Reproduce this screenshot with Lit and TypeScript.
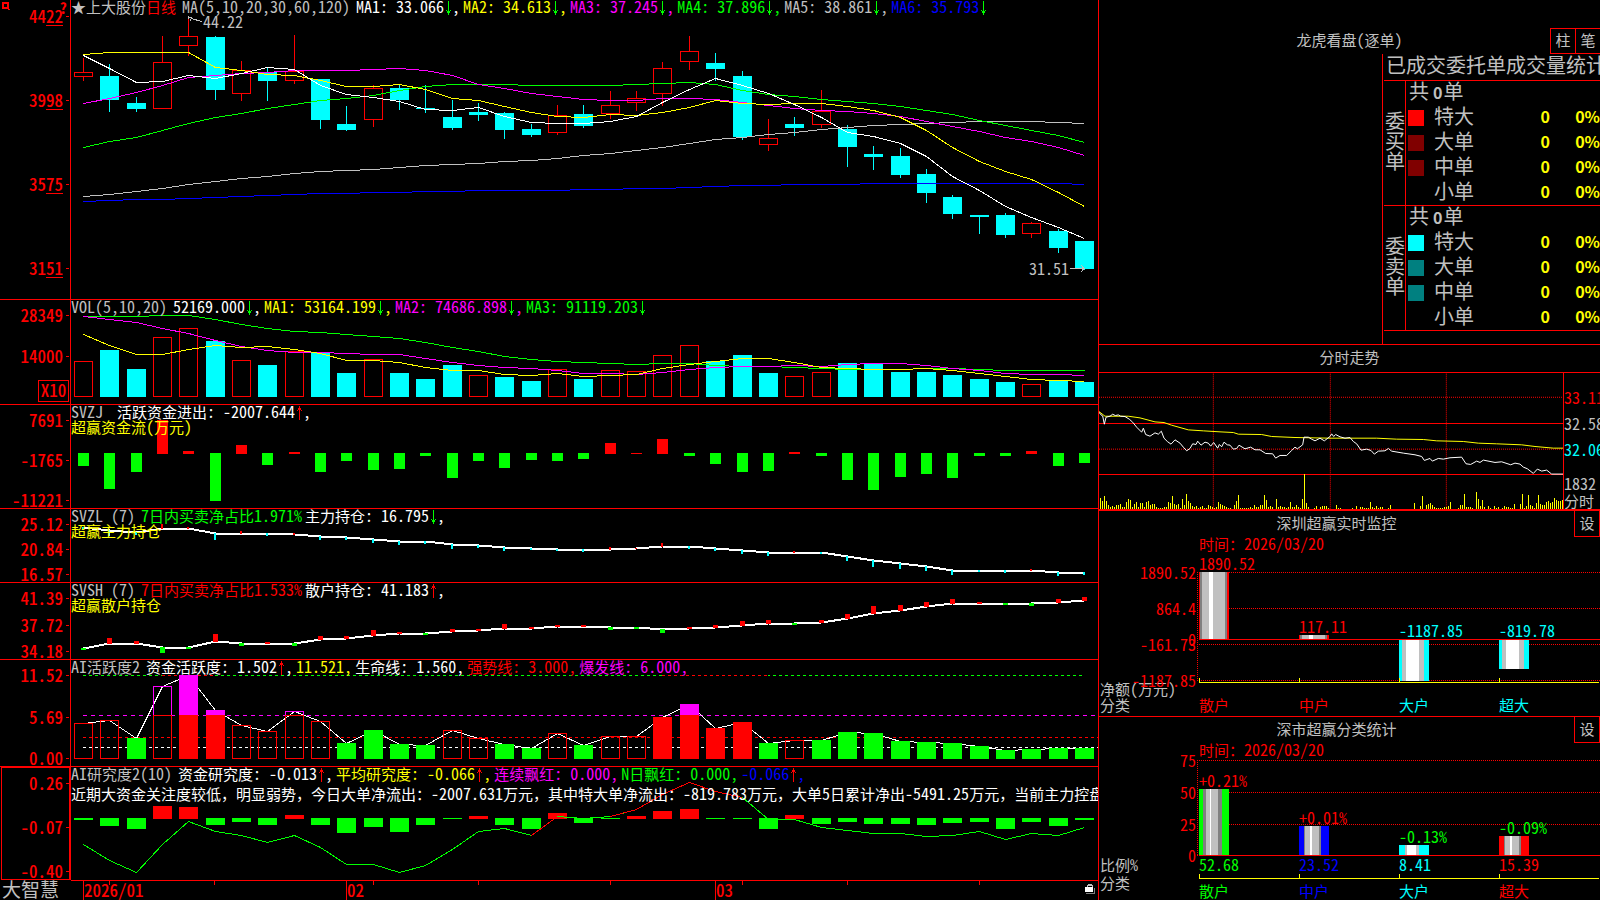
import { LitElement, html, svg, css, nothing } from "lit";
import { customElement, property } from "lit/decorators.js";

/* ---------- palette ---------- */
const RED = "#ff0000";
const CYAN = "#00ffff";
const GREEN = "#00ff00";
const YELLOW = "#ffff00";
const MAGENTA = "#ff00ff";
const BLUE = "#0000ff";
const WHITE = "#ffffff";
const SILVER = "#c0c0c0";
const GRAY = "#808080";

/* ---------- shared helpers ---------- */
const cx = (i: number) => Math.round(83 + 26.34 * i);

/** Full-width runs are set one size smaller than the half-width digits. */
const mix = (text: string) =>
  text
    .split(/([\u2000-\uffff]+)/)
    .filter(Boolean)
    .map((run) => (/[\u2000-\uffff]/.test(run) ? html`<span class="wide">${run}</span>` : run));

const arrow = (dir: "up" | "down") =>
  dir === "down"
    ? html`<svg class="arrow" viewBox="0 0 8 14"><path d="M4 0h1v14h-1zM3 10h3v2h-3zM2 9h1v1h-1zM6 9h1v1h-1z" fill=${GREEN} /></svg>`
    : html`<svg class="arrow" viewBox="0 0 8 14"><path d="M4 0h1v14h-1zM3 2h3v2h-3zM2 4h1v1h-1zM6 4h1v1h-1z" fill=${RED} /></svg>`;

const line = (ys: number[], color: string, width = 1, from = 0) => svg`
  <polyline fill="none" stroke=${color} stroke-width=${width} vector-effect="non-scaling-stroke"
    points=${ys.map((y, i) => `${cx(i + from) + 0.5},${y + 0.5}`).join(" ")} />`;

const box = (x: number, y: number, w: number, h: number, color: string) =>
  svg`<rect x=${x} y=${y} width=${w} height=${h} fill=${color} />`;

const frame = (x: number, y: number, w: number, h: number, color: string) =>
  svg`<rect x=${x + 0.5} y=${y + 0.5} width=${w - 1} height=${h - 1} fill="none" stroke=${color} vector-effect="non-scaling-stroke" />`;

const rule = (x1: number, y1: number, x2: number, y2: number, color: string, dash = "") => svg`
  <line x1=${x1} y1=${y1} x2=${x2} y2=${y2} stroke=${color} stroke-dasharray=${dash || nothing}
    vector-effect="non-scaling-stroke" />`;

/* ---------- series ---------- */
type Candle = [string, number, number, number, number];
const candles: Candle[] = [
  ["R", 58, 72, 76, 81], ["C", 64, 76, 100, 111], ["C", 97, 103, 109, 111], ["R", 36, 62, 108, 108],
  ["R", 16, 36, 45, 56], ["C", 36, 37, 90, 99], ["R", 61, 70, 93, 101], ["C", 68, 72, 81, 100],
  ["R", 35, 71, 80, 84], ["C", 79, 79, 120, 128], ["C", 106, 124, 130, 130], ["R", 85, 88, 119, 127],
  ["C", 85, 88, 100, 109], ["C", 85, 108, 109, 112], ["C", 100, 117, 128, 129], ["C", 103, 112, 115, 120],
  ["C", 112, 113, 130, 138], ["C", 124, 129, 135, 136], ["R", 105, 115, 132, 135], ["C", 105, 114, 126, 127],
  ["R", 91, 105, 113, 119], ["R", 91, 98, 102, 111], ["R", 62, 68, 93, 106], ["R", 36, 51, 61, 70],
  ["C", 53, 63, 69, 80], ["C", 71, 76, 137, 139], ["R", 119, 138, 144, 151], ["C", 117, 124, 128, 135],
  ["R", 90, 111, 124, 128], ["C", 125, 129, 147, 166], ["C", 146, 154, 157, 169], ["C", 148, 156, 175, 177],
  ["C", 169, 174, 193, 202], ["C", 195, 197, 214, 218], ["C", 215, 215, 217, 233], ["C", 213, 215, 235, 237],
  ["R", 222, 223, 233, 238], ["C", 229, 231, 248, 252], ["C", 241, 241, 269, 269],
];
const ma: [string, number[]][] = [
  [BLUE, [201, 200, 199, 199, 198, 197, 196, 195, 194, 193, 193, 192, 192, 191, 191, 190, 190, 190, 190, 189, 189, 188, 188, 187, 186, 185, 185, 184, 184, 184, 183, 183, 183, 183, 183, 183, 183, 183, 184]],
  [SILVER, [196, 194, 191, 188, 184, 181, 178, 176, 173, 171, 170, 169, 167, 165, 164, 163, 161, 160, 158, 155, 153, 150, 147, 143, 139, 137, 134, 132, 129, 127, 125, 124, 123, 122, 121, 121, 121, 122, 123]],
  [GREEN, [147, 141, 137, 130, 123, 117, 113, 108, 104, 100, 98, 95, 90, 86, 84, 84, 84, 85, 85, 85, 85, 84, 83, 82, 84, 90, 94, 96, 99, 101, 103, 106, 110, 114, 120, 125, 130, 135, 142]],
  [MAGENTA, [103, 98, 92, 85, 77, 75, 73, 72, 70, 70, 70, 69, 68, 70, 75, 84, 88, 93, 96, 99, 100, 100, 98, 98, 99, 102, 105, 108, 110, 111, 113, 116, 121, 126, 131, 137, 141, 147, 155]],
  [YELLOW, [54, 52, 52, 52, 52, 67, 70, 74, 75, 80, 86, 86, 84, 89, 98, 100, 106, 112, 116, 117, 114, 115, 112, 107, 100, 103, 104, 103, 103, 106, 110, 117, 130, 147, 161, 171, 179, 192, 206]],
  [WHITE, [55, 68, 82, 81, 75, 78, 73, 67, 69, 85, 94, 97, 101, 109, 110, 107, 116, 122, 123, 123, 121, 116, 102, 89, 78, 85, 93, 104, 117, 132, 136, 143, 156, 176, 190, 206, 217, 227, 238]],
];

const volKind = "RCCRRCRCRCCRCCCRCCRCRRRRCCCRRCCCCCCCRCC";
const volTop = [361, 350, 369, 337, 328, 341, 360, 365, 351, 353, 373, 359, 373, 379, 365, 375, 377, 381, 369, 379, 370, 371, 355, 345, 361, 355, 373, 376, 372, 363, 364, 372, 372, 375, 379, 382, 384, 381, 382];
const volMa: [string, number[]][] = [
  [GREEN, [316, 316, 316, 315, 315, 319, 324, 328, 331, 332, 334, 336, 338, 342, 347, 351, 356, 359, 361, 362, 363, 364, 363, 363, 365, 366, 366, 367, 368, 369, 369, 369, 368, 368, 369, 370, 370, 370, 370]],
  [MAGENTA, [316, 319, 322, 328, 333, 340, 346, 350, 352, 352, 353, 354, 354, 358, 362, 365, 367, 368, 370, 373, 373, 374, 372, 369, 367, 366, 366, 365, 366, 364, 363, 363, 365, 368, 370, 373, 374, 374, 375]],
  [YELLOW, [334, 345, 354, 354, 349, 345, 347, 346, 349, 353, 360, 360, 362, 367, 370, 370, 374, 375, 373, 376, 375, 374, 368, 364, 361, 358, 358, 362, 367, 368, 369, 369, 368, 370, 373, 376, 379, 380, 381]],
];

/* values above the 453 base line are inflows */
const flow = [466, 489, 472, 420, 451, 501, 445, 465, 452, 472, 461, 470, 469, 456, 478, 461, 468, 460, 461, 459, 443, 453, 439, 456, 464, 472, 471, 452, 456, 480, 490, 477, 474, 478, 456, 456, 451, 466, 463];

const mainHold = [527, 530, 532, 528, 528, 533, 533, 533, 534, 536, 537, 539, 541, 541, 544, 545, 547, 548, 549, 549, 549, 548, 546, 546, 548, 550, 552, 552, 552, 556, 560, 563, 566, 570, 570, 570, 570, 572, 572];
const mainMark = [-2, -5, -2, 4, 1, -6, 2, -2, 1, -3, -2, -3, -3, -2, -4, -2, -3, -1, -1, -2, 2, 0, 3, -2, -2, -3, -3, 1, -1, -4, -6, -5, -4, -4, -1, -2, 1, -3, -2];
const retailHold = [648, 643, 643, 647, 647, 641, 643, 643, 643, 639, 638, 635, 633, 633, 631, 630, 628, 628, 626, 626, 627, 627, 629, 628, 627, 625, 623, 623, 622, 618, 613, 610, 606, 603, 603, 603, 603, 602, 600];
const retailMark = [-1, 5, 2, -5, -1, 7, -2, 1, -2, 3, 2, 5, 1, -1, 2, 1, 4, 1, 1, 1, -2, -1, -3, 1, 2, 4, 3, -1, 2, 4, 7, 5, 4, 4, 1, -1, -2, 3, 3];

/* R outline, G weak, F strong, M burst filled, O burst outline */
const actKind = "RRGOMMRROR" + "GGGGRRGGRG" + "RRFMFFGRGG" + "GGGGGGGGG";
const actTop = [723, 720, 738, 686, 675, 710, 725, 731, 711, 721, 743, 730, 744, 745, 730, 738, 744, 748, 733, 745, 736, 736, 717, 704, 728, 722, 743, 740, 740, 732, 733, 741, 742, 743, 746, 750, 749, 748, 748];

const study = [820, 826, 829, 806, 807, 825, 822, 825, 815, 825, 833, 827, 832, 825, 819, 816, 825, 829, 813, 823, 819, 816, 811, 809, 819, 819, 829, 815, 824, 822, 824, 824, 825, 823, 822, 829, 822, 826, 820];
const studyLine = [844, 860, 872, 844, 821, 831, 835, 842, 835, 847, 864, 864, 872, 865, 849, 831, 828, 835, 816, 818, 816, 809, 794, 782, 791, 797, 819, 819, 827, 830, 833, 833, 836, 835, 831, 839, 833, 835, 827];

/* ---------- plots ---------- */
const priceplot = () => svg`
  ${candles.map(([k, hi, top, bot, lo], i) => {
    const c = cx(i);
    return k === "R"
      ? svg`${box(c, hi, 1, top - hi, RED)}${box(c, bot, 1, Math.max(lo - bot, 0), RED)}${frame(c - 9, top, 19, bot - top + 1, RED)}`
      : svg`${box(c, hi, 1, lo - hi + 1, CYAN)}${box(c - 9, top, 19, Math.max(bot - top, 1), CYAN)}`;
  })}
  ${ma.map(([color, ys]) => line(ys, color))}
  <path d="M189 17.5h3M188.5 16v3M190.500 18.500v2M191 18.500l11 3" fill="none" stroke=${SILVER} vector-effect="non-scaling-stroke" />
  <path d="M1070 268.500h14M1081 265l3 3.500l-3 3.500" fill="none" stroke=${SILVER} vector-effect="non-scaling-stroke" />`;

const volplot = () => svg`
  ${volTop.map((t, i) => (volKind[i] === "R" ? frame : box)(cx(i) - 9, t, 19, 397 - t, volKind[i] === "R" ? RED : CYAN))}
  ${volMa.map(([color, ys]) => line(ys, color))}`;

const flowplot = () =>
  flow.map((v, i) => (v <= 453 ? box(cx(i) - 5, v, 11, 454 - v, RED) : box(cx(i) - 5, 453, 11, v - 453, GREEN)));

const holdplot = (ys: number[], marks: number[], w: number, down: string) => svg`
  ${line(ys, WHITE, 2)}
  ${ys.map((y, i) => {
    const m = marks[i];
    const x = cx(i) - Math.floor(w / 2);
    return m >= 0 ? box(x, y - m, w, m + 1, RED) : box(x, y, w, 1 - m, down);
  })}`;

const activeplot = () => svg`
  ${rule(83, 675.5, 1084, 675.5, GREEN, "3 3")}
  ${[[3, 5], [22, 26]].map(([a, b]) => svg`${box(cx(a), 675, cx(b) - cx(a), 1, "#000")}${rule(cx(a), 675.5, cx(b), 675.5, RED, "3 3")}`)}
  ${rule(83, 715.5, 1098, 715.5, MAGENTA, "4 4")}
  ${rule(83, 737.5, 1098, 737.5, RED, "3 3")}
  ${rule(83, 747.5, 1098, 747.5, WHITE, "3 3")}
  ${line(actTop, WHITE)}
  ${actTop.map((t, i) => {
    const x = cx(i) - 9;
    const h = 759 - t;
    switch (actKind[i]) {
      case "G": return box(x, t, 19, h, GREEN);
      case "F": return box(x, t, 19, h, RED);
      case "M": return svg`${box(x, t, 19, 715 - t, MAGENTA)}${box(x, 715, 19, 44, RED)}`;
      case "O": return svg`${frame(x, t, 19, 716 - t, MAGENTA)}${frame(x, 715, 19, 44, RED)}`;
      default: return frame(x, t, 19, h, RED);
    }
  })}`;

const studyplot = () => svg`
  ${study.map((v, i) => (v < 818 ? box(cx(i) - 9, v, 19, 819 - v, RED) : box(cx(i) - 9, 818, 19, v - 818, GREEN)))}
  ${line(studyLine, GREEN)}
  ${line(studyLine.slice(17, 19), RED, 1, 17)}
  ${line(studyLine.slice(20, 26), RED, 1, 20)}`;

/* ---------- indicator captions ---------- */
type Seg = [string, string, ("up" | "down" | "none" | "bare")?];
const seg = ([text, tone, dir]: Seg, last: boolean) => html`<span class="seg ${tone}"
    >${mix(text)}${dir === "up" || dir === "down" ? arrow(dir) : nothing}${dir === "bare" || (last && dir === "down") ? nothing : ","}</span>`;

interface Panel {
  cls: string;
  view: string;
  ticks: string[];
  title: unknown;
  segs: Seg[];
  note?: [string, string];
  plot: () => unknown;
}

const panels: Panel[] = [
  {
    cls: "price", view: "71 0 1027 299", ticks: ["4422", "3998", "3575", "3151"],
    title: html`${mix("★上大股份")}<span class="red">${mix("日线")}</span><span class="ml">MA(5,10,20,30,60,120)</span>`,
    segs: [["MA1: 33.066", "white", "down"], ["MA2: 34.613", "yellow", "down"], ["MA3: 37.245", "magenta", "down"], ["MA4: 37.896", "green", "down"], ["MA5: 38.861", "silver", "down"], ["MA6: 35.793", "blue", "down"]],
    plot: priceplot,
  },
  {
    cls: "vol", view: "71 300 1027 104", ticks: ["28349", "14000"], title: "VOL(5,10,20)",
    segs: [["52169.000", "white", "down"], ["MA1: 53164.199", "yellow", "down"], ["MA2: 74686.898", "magenta", "down"], ["MA3: 91119.203", "green", "down"]],
    plot: volplot,
  },
  {
    cls: "flow", view: "71 405 1027 103", ticks: ["7691", "-1765", "-11221"], title: "SVZJ ",
    segs: [["活跃资金进出: -2007.644", "white", "up"]],
    note: ["超赢资金流(万元)", "yellow"], plot: flowplot,
  },
  {
    cls: "hold", view: "71 509 1027 73", ticks: ["25.12", "20.84", "16.57"], title: "SVZL (7)",
    segs: [["7日内买卖净占比1.971%", "green", "bare"], ["主力持仓: 16.795", "white", "down"]],
    note: ["超赢主力持仓", "yellow"], plot: () => holdplot(mainHold, mainMark, 2, CYAN),
  },
  {
    cls: "hold", view: "71 583 1027 76", ticks: ["41.39", "37.72", "34.18"], title: "SVSH (7)",
    segs: [["7日内买卖净占比1.533%", "red", "bare"], ["散户持仓: 41.183", "white", "up"]],
    note: ["超赢散户持仓", "yellow"], plot: () => holdplot(retailHold, retailMark, 5, GREEN),
  },
  {
    cls: "active", view: "71 660 1027 106", ticks: ["11.52", "5.69", "0.00"], title: mix("AI活跃度2"),
    segs: [["资金活跃度: 1.502", "white", "up"], ["11.521", "yellow"], ["生命线: 1.560", "white"], ["强势线: 3.000", "red"], ["爆发线: 6.000", "magenta"]],
    plot: activeplot,
  },
  {
    cls: "study", view: "71 767 1027 113", ticks: ["0.26", "-0.07", "-0.40"], title: mix("AI研究度2(10)"),
    segs: [["资金研究度: -0.013", "white", "up"], ["平均研究度: -0.066", "yellow", "up"], ["连续飘红: 0.000", "magenta"], ["N日飘红: 0.000", "green"], ["-0.066", "blue", "up"]],
    note: ["近期大资金关注度较低，明显弱势，今日大单净流出：-2007.631万元，其中特大单净流出：-819.783万元，大单5日累计净出-5491.25万元，当前主力控盘", "white"],
    plot: studyplot,
  },
];

const common = css`
  :host {
    font-family: "Noto Sans CJK SC", "Liberation Sans", sans-serif;
    font-size: 16px;
    line-height: 16px;
    font-feature-settings: "hwid";
    color: #c0c0c0;
  }
  * { box-sizing: border-box; }
  .wide { font-size: 15px; font-feature-settings: normal; }
  svg { display: block; }
  .plot { width: 100%; height: 100%; shape-rendering: crispEdges; }
  .red { color: #ff0000; }
  .cyan { color: #00ffff; }
  .green { color: #00ff00; }
  .yellow { color: #ffff00; }
  .magenta { color: #ff00ff; }
  .blue { color: #0000ff; }
  .white { color: #ffffff; }
  .silver { color: #c0c0c0; }
  .label { position: absolute; white-space: pre; transform: translateY(-50%); padding-bottom: 2px; }
  h2 { margin: 0; font-size: 16px; line-height: 22px; font-weight: 400; text-align: center; }
  button {
    width: 26px; height: 26px; padding: 0 0 2px; border: 1px solid #ff0000; background: #000;
    color: #c0c0c0; font: inherit; font-size: 15px; cursor: pointer;
  }
`;

/* ---------- category bar board ---------- */
interface Bar {
  name: string;
  tone: string;
  top: number;
  bottom: number;
  text: string;
  textTone: string;
  textY: number;
  share?: string;
  stripes: [number, string][];
}
interface Board {
  title: string;
  y: number;
  h: number;
  zero: number;
  ticks: [string, number][];
  grid: number[];
  axis: number;
  dateY: number;
  catY: number;
  shareY: number;
  side: [string, number][];
  bars: Bar[];
}

@customElement("bar-board")
export class BarBoard extends LitElement {
  @property({ attribute: false }) board!: Board;

  static styles = [
    common,
    css`
      :host { display: grid; grid-template-rows: 26px minmax(0, 1fr); min-height: 0; }
      .head { display: grid; grid-template-columns: minmax(0, 1fr) 26px; align-items: start; }
      button { border-top: 0; }
      .area { position: relative; min-height: 0; }
    `,
  ];

  render() {
    const b = this.board;
    const top = (y: number) => `top:${((y - b.y) / b.h) * 100}%`;
    const left = (x: number) => `left:${((x - 1099) / 501) * 100}%`;
    return html`
      <header class="head"><h2>${mix(b.title)}</h2><button>设</button></header>
      <div class="area">
        <svg class="plot" viewBox="1099 ${b.y} 501 ${b.h}" preserveAspectRatio="none">
          ${b.grid.map((y) => rule(1197, y + 0.5, 1600, y + 0.5, RED, "1 1"))}
          ${rule(1197.5, b.grid[0], 1197.5, b.grid[b.grid.length - 1], RED, "1 1")}
          ${b.bars.map((bar, i) => {
            let x = 1199 + i * 100;
            return bar.stripes.map(([w, color]) => {
              const r = box(x, bar.top, w, bar.bottom - bar.top, color);
              x += w;
              return r;
            });
          })}
          ${box(1199, b.zero, 401, 1, RED)}
          ${box(1199, b.axis, 400, 1, YELLOW)}
          ${b.bars.map((_, i) => box(1199 + i * 100, b.axis - 4, 1, 4, YELLOW))}
        </svg>
        <span class="label red" style="${left(1199)};${top(b.dateY)}">${mix("时间：")}2026/03/20</span>
        ${b.side.map(([t, y]) => html`<span class="label" style="${left(1100)};${top(y)}">${mix(t)}</span>`)}
        ${b.ticks.map(([t, y]) => html`<span class="label red" style="right:${((1600 - 1196) / 501) * 100}%;${top(y)}">${t}</span>`)}
        ${b.bars.map((bar, i) => {
          const x = left(1199 + i * 100);
          return html`
            <span class="label ${bar.textTone}" style="${x};${top(bar.textY)}">${bar.text}</span>
            ${bar.share ? html`<span class="label ${bar.tone}" style="${x};${top(b.shareY)}">${bar.share}</span>` : nothing}
            <span class="label ${bar.tone}" style="${x};${top(b.catY)}">${mix(bar.name)}</span>`;
        })}
      </div>`;
  }
}

const upStripes: [number, string][] = [[1, RED], [2, GRAY], [7, SILVER], [4, WHITE], [12, SILVER], [2, GRAY], [2, RED]];
const downStripes: [number, string][] = [[3, CYAN], [4, SILVER], [13, WHITE], [5, SILVER], [5, CYAN]];
const thinStripes = (c: string): [number, string][] => [[5, c], [1, GRAY], [5, SILVER], [2, WHITE], [7, SILVER], [2, GRAY], [8, c]];

const monitor: Board = {
  title: "深圳超赢实时监控", y: 537, h: 179, zero: 639, axis: 682, dateY: 544, catY: 705, shareY: 0,
  grid: [572, 608, 644, 680],
  ticks: [["1890.52", 573], ["864.4", 609], ["0", 640], ["-161.73", 645], ["-1187.85", 681]],
  side: [["净额(万元)", 689], ["分类", 705]],
  bars: [
    { name: "散户", tone: "red", top: 572, bottom: 639, text: "1890.52", textTone: "red", textY: 564, stripes: upStripes },
    { name: "中户", tone: "red", top: 635, bottom: 639, text: "117.11", textTone: "red", textY: 627, stripes: upStripes },
    { name: "大户", tone: "cyan", top: 640, bottom: 681, text: "-1187.85", textTone: "cyan", textY: 631, stripes: downStripes },
    { name: "超大", tone: "cyan", top: 640, bottom: 669, text: "-819.78", textTone: "cyan", textY: 631, stripes: downStripes },
  ],
};

const stats: Board = {
  title: "深市超赢分类统计", y: 743, h: 157, zero: 855, axis: 878, dateY: 750, catY: 891, shareY: 865,
  grid: [760, 792, 824, 855],
  ticks: [["75", 761], ["50", 793], ["25", 825], ["0", 856]],
  side: [["比例%", 865], ["分类", 883]],
  bars: [
    { name: "散户", tone: "green", top: 789, bottom: 855, text: "+0.21%", textTone: "red", textY: 781, share: "52.68", stripes: [[4, GREEN], [3, GRAY], [4, SILVER], [1, WHITE], [7, SILVER], [4, GRAY], [7, GREEN]] },
    { name: "中户", tone: "blue", top: 826, bottom: 855, text: "+0.01%", textTone: "red", textY: 818, share: "23.52", stripes: thinStripes(BLUE) },
    { name: "大户", tone: "cyan", top: 845, bottom: 855, text: "-0.13%", textTone: "green", textY: 837, share: "8.41", stripes: [[6, CYAN], [2, SILVER], [9, WHITE], [3, SILVER], [10, CYAN]] },
    { name: "超大", tone: "red", top: 836, bottom: 855, text: "-0.09%", textTone: "green", textY: 828, share: "15.39", stripes: thinStripes(RED) },
  ],
};

/* ---------- intraday chart, three units per pixel ---------- */
const minutePrice = "27,217 33,225 38,228 43,253 48,232 60,229 68,223 76,227 85,225 92,229 105,230 118,238 128,247 140,262 155,277 160,265 167,284 180,289 195,279 205,283 214,274 222,295 232,305 243,313 255,300 270,310 280,322 290,333 300,326 308,312 318,314 323,304 333,316 345,307 355,310 362,319 371,308 383,325 388,314 395,321 402,307 412,315 420,316 430,328 440,326 447,316 465,327 482,322 495,330 510,330 527,341 548,342 557,355 570,347 590,347 605,332 615,322 622,327 638,315 642,292 655,292 665,298 675,303 690,295 703,303 720,290 725,282 731,290 737,284 750,291 765,295 780,293 790,305 800,312 813,331 830,328 843,332 853,343 865,334 885,333 895,326 905,334 940,340 975,345 995,350 1003,362 1020,356 1027,364 1045,356 1060,358 1080,354 1115,352 1128,372 1142,374 1160,364 1170,368 1180,361 1215,368 1235,366 1262,375 1275,370 1290,373 1300,382 1312,387 1330,401 1342,388 1355,394 1370,391 1385,403 1420,403";
const minuteAvg = "27,215 45,229 115,229 150,234 195,246 222,248 245,256 295,270 340,273 390,276 430,278 445,283 515,284 545,290 615,293 720,295 860,295 920,298 1000,299 1040,303 1120,305 1165,310 1220,312 1295,315 1335,320 1390,325 1420,325";
/* one base-36 digit per minute slot; [first slot, heights] */
const minuteVol: [number, string][] = [
  [0, "b8d84232445227a9257266278455"], [28, "2111226"], [34, "76d545 a".replace(" ", "1")], [42, "4f"], [44, "863231231143212"],
  [59, "7543211"], [66, "048"], [69, "e1111121422"], [80, "44e9232"], [88, "a232212"],
  [95, "722421az62"], [107, "1302333100"], [117, "0411000001"], [127, "030221117213122"], [144, "14"],
  [157, "6003"], [161, "d04564211112237"], [176, "000144"], [182, "f2221"], [188, "ha39203103120"],
  [201, "1322115005"], [211, "f13e"], [215, "4316e"], [220, "5447867"], [227, "b9888"], [231, "9"],
];

const minuteplot = () => svg`
  ${box(27, 249, 1393, 3, RED)}${box(27, 402, 1393, 3, RED)}
  ${[172, 328].map((y) => rule(27, y, 1420, y, RED, "1 1"))}
  ${[370, 721, 1069].map((x) => rule(x, 97, x, 508, RED, "1 1"))}
  ${minuteVol.flatMap(([start, heights]) =>
    [...heights].map((d, k) => {
      const h = parseInt(d, 36) * 3;
      return box(30 + 6 * (start + k), 508 - h, 3, h, YELLOW);
    }))}
  <polyline points=${minuteAvg} fill="none" stroke=${YELLOW} vector-effect="non-scaling-stroke" />
  <polyline points=${minutePrice} fill="none" stroke=${WHITE} vector-effect="non-scaling-stroke" />`;

const orderSides = [
  { side: "委买单", swatches: ["s-red", "s-maroon", "s-maroon", ""] },
  { side: "委卖单", swatches: ["s-cyan", "s-teal", "s-teal", ""] },
];
const orderKinds = ["特大", "大单", "中单", "小单"];

const months: [number, string][] = [[83, "2026/01"], [346, "02"], [715, "03"]];
const weeks = [109, 214, 373, 478, 610, 742, 847, 979];

@customElement("app-root")
export class AppRoot extends LitElement {
  static styles = [
    common,
    css`
      :host {
        display: grid;
        grid-template-columns: minmax(0, 1099fr) minmax(0, 501fr);
        height: 100vh;
        background: #000;
        overflow: hidden;
      }
      .left {
        display: grid;
        grid-template-rows: minmax(0, 299fr) minmax(0, 105fr) minmax(0, 104fr) minmax(0, 74fr) minmax(0, 77fr) minmax(0, 107fr) minmax(0, 114fr) minmax(0, 20fr);
        border-right: 1px solid #ff0000;
        min-height: 0;
      }
      .panel {
        display: grid;
        grid-template-columns: 71px minmax(0, 1fr);
        grid-template-rows: minmax(0, 1fr);
        border-top: 1px solid #ff0000;
      }
      .panel.price { border-top: 0; }
      .axis {
        position: relative;
        display: flex;
        flex-direction: column;
        align-items: flex-end;
        justify-content: space-between;
        border-right: 1px solid #ff0000;
        padding: 7px 7px 0 0;
        color: #ff0000;
        font-size: 17px;
        font-weight: 500;
      }
      .price .axis { padding: 8px 7px 23px 0; }
      .vol .axis { padding-bottom: 2px; justify-content: flex-start; }
      .vol .tick + .tick { margin-top: 25px; }
      .study .axis { padding-right: 6px; border: 1px solid #ff0000; border-right-width: 2px; margin-left: 1px; }
      .tick { position: relative; white-space: nowrap; }
      .tick::after { content: ""; position: absolute; right: -6px; top: 8px; width: 3px; height: 1px; background: #ff0000; }
      .under { display: inline-block; height: 18px; border-bottom: 1px solid #ff0000; }
      .price .tick { height: 16px; }
      .factor {
        margin: auto -6px 0 0; width: 31px; height: 22px; border: 1px solid #ff0000;
        line-height: 18px; text-align: center; flex: none;
      }
      .corner { position: absolute; left: 2px; top: 2px; }
      .help { position: absolute; right: 3px; top: 0; color: #ff0000; font-size: 15px; line-height: 16px; font-weight: 700; }
      .body { position: relative; min-width: 0; min-height: 0; overflow: hidden; }
      .caption { position: absolute; left: 0; top: 0; line-height: 13px; }
      .line { display: flex; height: 15px; }
      .line span { white-space: pre; }
      .study .line { height: 20px; }
      .name { margin-right: 6px; }
      .ml { margin-left: 6px; }
      .seg { margin-right: 3px; }
      .arrow { display: inline-block; width: 8px; height: 14px; vertical-align: -2px; shape-rendering: crispEdges; }
      .time { display: grid; grid-template-columns: 71px minmax(0, 1fr); grid-template-rows: minmax(0, 1fr); }
      .brand { font-size: 19px; line-height: 18px; padding-left: 2px; font-feature-settings: normal; white-space: nowrap; }
      .scale { position: relative; border-top: 1px solid #ff0000; color: #ff0000; font-size: 17px; font-weight: 500; }
      .scale .plot { position: absolute; }
      .lock { position: absolute; right: 3px; top: 2px; }

      .right {
        display: grid;
        grid-template-rows: minmax(0, 344fr) minmax(0, 165fr) minmax(0, 207fr) minmax(0, 184fr);
        min-width: 0;
        min-height: 0;
      }
      .orders { display: grid; grid-template-rows: 26px minmax(0, 1fr); padding-top: 28px; min-width: 0; overflow: hidden; }
      .orders-head { display: grid; grid-template-columns: minmax(0, 1fr) auto minmax(0, 1fr); }
      .tools { display: flex; justify-content: flex-end; grid-column: 3; }
      .tools button { width: 25px; border-right: 0; }
      .orders-head h2 { grid-column: 2; }
      .book { margin-left: auto; width: 218px; border-left: 1px solid #ff0000; padding-left: 1px; overflow: hidden; }
      h3 { margin: 0; padding-left: 2px; font-size: 20px; line-height: 22px; height: 26px; font-weight: 400; white-space: nowrap; font-feature-settings: normal; }
      table { width: 100%; border-spacing: 0; table-layout: fixed; font-size: 20px; border-bottom: 1px solid #ff0000; }
      th, td { height: 25px; padding: 0 0 4px; font-weight: 400; text-align: left; vertical-align: middle; white-space: nowrap; line-height: 18px; font-feature-settings: normal; }
      .c-side { width: 22px; }
      .c-mark { width: 28px; }
      .c-name { width: 60px; }
      .c-num { width: 56px; }
      .side { border-top: 1px solid #ff0000; border-right: 1px solid #ff0000; white-space: normal; padding-left: 1px; line-height: 20px; }
      .total { border-top: 1px solid #ff0000; padding-left: 3px; }
      .total b { font-size: 16px; line-height: 16px; padding: 0 1px 0 4px; }
      .mark { padding: 0; }
      .swatch { display: block; width: 16px; height: 16px; margin-left: 2px; }
      .s-red { background: #ff0000; }
      .s-maroon { background: #800000; }
      .s-cyan { background: #00ffff; }
      .s-teal { background: #008080; }
      .num { text-align: right; color: #ffff00; font-size: 16px; font-weight: 700; }

      .intraday { border-top: 1px solid #ff0000; display: grid; grid-template-rows: 27px minmax(0, 1fr); min-width: 0; }
      .minute { display: grid; grid-template-columns: minmax(0, 1fr) 36px; grid-template-rows: minmax(0, 1fr); border-top: 1px solid #ff0000; }
      .minute-plot { border-right: 1px solid #ff0000; min-width: 0; }
      .levels { position: relative; overflow: hidden; }
      .monitor { border-top: 2px solid #ff0000; }
      .stats { border-top: 1px solid #ff0000; }
    `,
  ];

  private panel(p: Panel) {
    return html`
      <section class="panel ${p.cls}">
        <div class="axis">
          ${p.ticks.map((t) =>
            p.cls === "price"
              ? html`<span class="tick">${t.slice(0, 2)}<span class="under">${t.slice(2)}</span></span>`
              : html`<span class="tick">${t}</span>`)}
          ${p.cls === "vol" ? html`<span class="factor">X10</span>` : nothing}
          ${p.cls === "price"
            ? html`<svg class="corner" width="8" height="8" viewBox="0 0 8 8" shape-rendering="crispEdges"><path d="M1 1h5v5h-5z" fill="none" stroke=${RED} stroke-width="2" /><path d="M6 7h2v1h-2z" fill=${RED} /></svg><span class="help">?</span>`
            : nothing}
        </div>
        <div class="body">
          <svg class="plot" viewBox=${p.view} preserveAspectRatio="none">${p.plot()}</svg>
          <div class="caption">
            <div class="line"><span class="name">${p.title}</span>${p.segs.map((s, i) => seg(s, i === p.segs.length - 1 && /^MA/.test(s[0])))}</div>
            ${p.note ? html`<div class="line ${p.note[1]}"><span>${mix(p.note[0])}</span></div>` : nothing}
          </div>
          ${p.cls === "price"
            ? html`<span class="label" style="left:${(132 / 1027) * 100}%;top:${(22 / 299) * 100}%">44.22</span>
                <span class="label" style="left:${(958 / 1027) * 100}%;top:${(269 / 299) * 100}%">31.51</span>`
            : nothing}
        </div>
      </section>`;
  }

  render() {
    return html`
      <main class="left">
        ${panels.map((p) => this.panel(p))}
        <footer class="time">
          <span class="brand">大智慧</span>
          <div class="scale">
            <svg class="plot" viewBox="71 881 1027 19" preserveAspectRatio="none">
              ${months.map(([x]) => box(x, 881, 1, 19, RED))}${weeks.map((x) => box(x, 881, 1, 4, RED))}
            </svg>
            ${months.map(([x, t]) => html`<span class="label" style="left:${((x + 1 - 71) / 1027) * 100}%;top:50%">${t}</span>`)}
            <svg class="lock" width="10" height="11" viewBox="0 0 10 11" shape-rendering="crispEdges">
              <path d="M2 4v-2h1v-1h3v1h1v2" fill="none" stroke=${SILVER} /><path d="M3 2h3v1h-3z" fill=${SILVER} />
              <path d="M1 5h9v6h-9z" fill=${GRAY} /><path d="M0 4h9v6h-9z" fill="#000" /><path d="M0 4h8v5h-8z" fill=${WHITE} />
            </svg>
          </div>
        </footer>
      </main>
      <aside class="right">
        <section class="orders">
          <header class="orders-head">
            <h2>${mix("龙虎看盘")}(${mix("逐单")})</h2>
            <div class="tools"><button>柱</button><button>笔</button></div>
          </header>
          <div class="book">
            <h3>已成交委托单成交量统计</h3>
            <table>
              <colgroup><col class="c-side" /><col class="c-mark" /><col class="c-name" /><col class="c-num" /><col /></colgroup>
              ${orderSides.map((o) => html`<tbody>
                <tr><th class="side" rowspan="5" scope="rowgroup">${o.side}</th><td class="total" colspan="4">共<b>0</b>单</td></tr>
                ${orderKinds.map((k, i) => html`<tr>
                  <td class="mark">${o.swatches[i] ? html`<span class="swatch ${o.swatches[i]}"></span>` : nothing}</td>
                  <th scope="row">${k}</th><td class="num">0</td><td class="num">0%</td>
                </tr>`)}
              </tbody>`)}
            </table>
          </div>
        </section>
        <section class="intraday">
          <h2>${mix("分时走势")}</h2>
          <div class="minute">
            <div class="minute-plot"><svg class="plot" viewBox="27 99 1392 409" preserveAspectRatio="none">${minuteplot()}</svg></div>
            <div class="levels">
              ${([["33.11", 398, "red"], ["32.58", 424, "silver"], ["32.06", 450, "cyan"], ["1832", 484, "silver"], ["分时", 501, "silver"]] as [string, number, string][]).map(
                ([t, y, tone]) => html`<span class="label ${tone}" style="top:${((y - 373) / 136) * 100}%">${mix(t)}</span>`)}
            </div>
          </div>
        </section>
        <bar-board class="monitor" .board=${monitor}></bar-board>
        <bar-board class="stats" .board=${stats}></bar-board>
      </aside>`;
  }
}
